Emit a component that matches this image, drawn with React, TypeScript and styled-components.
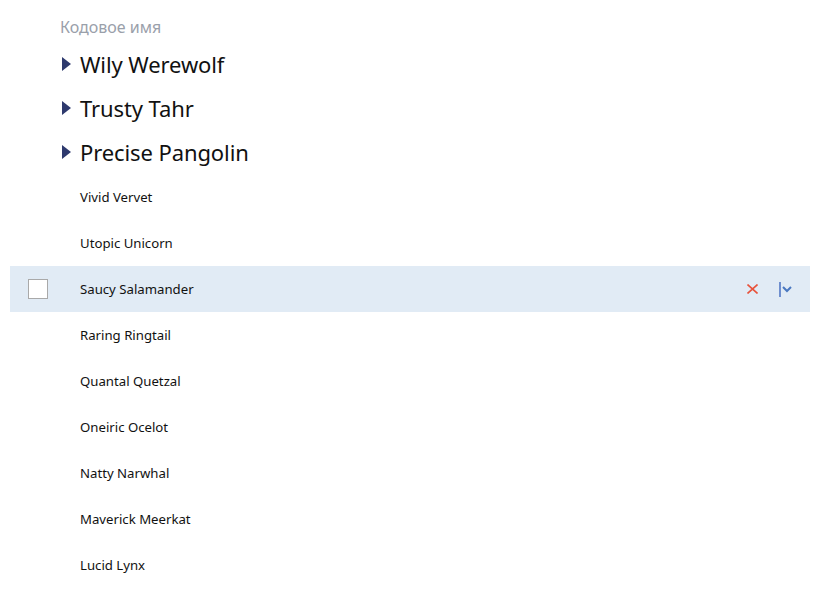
import React from "react";
import styled, { createGlobalStyle } from "styled-components";

const Global = createGlobalStyle`
  html, body { margin: 0; padding: 0; background: #fff; }
  body { font-family: "Noto Sans", "Open Sans", sans-serif; color: #111; }
`;

const Page = styled.div`
  padding: 10px 10px 0 10px;
  width: 800px;
`;

const Header = styled.div`
  height: 32px;
  box-sizing: border-box;
  padding-top: 2px;
  display: flex;
  align-items: center;
  padding-left: 50px;
  font-size: 16px;
  color: #9aa0aa;
`;

const GroupRow = styled.div`
  height: 44px;
  display: flex;
  align-items: center;
  padding-left: 52px;
  gap: 9px;
  font-size: 22px;
  letter-spacing: -0.1px;
  color: #111;
`;

const Caret = styled.span`
  width: 0;
  height: 0;
  border-top: 7px solid transparent;
  border-bottom: 7px solid transparent;
  border-left: 9px solid #2e3a6e;
`;

const Row = styled.div<{ $selected?: boolean }>`
  height: 46px;
  display: flex;
  align-items: center;
  background: ${(p) => (p.$selected ? "#e1ebf5" : "transparent")};
  font-size: 13.2px;
  color: #111;
`;

const CheckCell = styled.div`
  width: 70px;
  display: flex;
  padding-left: 18px;
  box-sizing: border-box;
`;

const Checkbox = styled.span`
  width: 20px;
  height: 20px;
  box-sizing: border-box;
  border: 1px solid #a9a9a9;
  background: #fff;
`;

const Label = styled.span`
  flex: 1;
`;

const Actions = styled.div`
  display: flex;
  align-items: center;
  gap: 21px;
  padding-right: 18px;
`;

const Divider = styled.span`
  width: 2px;
  height: 15px;
  background: #6f8fcf;
`;

const Dropdown = styled.span`
  display: flex;
  align-items: center;
  gap: 1px;
`;

const groups = ["Wily Werewolf", "Trusty Tahr", "Precise Pangolin"];
const items = [
  "Vivid Vervet",
  "Utopic Unicorn",
  "Saucy Salamander",
  "Raring Ringtail",
  "Quantal Quetzal",
  "Oneiric Ocelot",
  "Natty Narwhal",
  "Maverick Meerkat",
  "Lucid Lynx",
];

export default function App() {
  return (
    <>
      <Global />
      <Page>
        <Header>Кодовое имя</Header>
        {groups.map((g) => (
          <GroupRow key={g}>
            <Caret />
            {g}
          </GroupRow>
        ))}
        {items.map((it) => {
          const sel = it === "Saucy Salamander";
          return (
            <Row key={it} $selected={sel}>
              <CheckCell>{sel && <Checkbox />}</CheckCell>
              <Label>{it}</Label>
              {sel && (
                <Actions>
                  <svg width="11" height="10" viewBox="0 0 11 10">
                    <path d="M0.5 0.5 L10.5 9.5 M10.5 0.5 L0.5 9.5" stroke="#e8533c" strokeWidth="1.6" />
                  </svg>
                  <Dropdown>
                    <Divider />
                    <svg width="10" height="7" viewBox="0 0 10 7">
                      <path d="M1 1 L5 5 L9 1" stroke="#4a78c0" strokeWidth="2" fill="none" />
                    </svg>
                  </Dropdown>
                </Actions>
              )}
            </Row>
          );
        })}
      </Page>
    </>
  );
}
